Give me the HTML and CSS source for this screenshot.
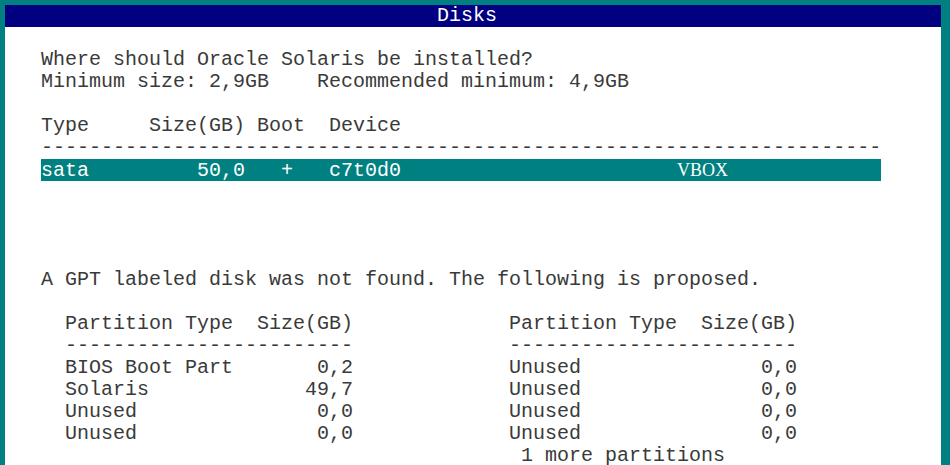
FILE: index.html
```html
<!DOCTYPE html>
<html>
<head>
<meta charset="utf-8">
<link rel="stylesheet" href="styles.css">
<title>Disks</title>
</head>
<body>
<div class="screen">
  <div class="window">
    <div class="title">Disks</div>
    <div class="content">
      <div class="line"></div>
      <div class="line">Where should Oracle Solaris be installed?</div>
      <div class="line">Minimum size: 2,9GB    Recommended minimum: 4,9GB</div>
      <div class="line"></div>
      <div class="line">Type     Size(GB) Boot  Device</div>
      <div class="line">----------------------------------------------------------------------</div>
      <div class="line selected">sata         50,0   +   c7t0d0                       <span class="vbox">VBOX</span></div>
      <div class="line"></div>
      <div class="line"></div>
      <div class="line"></div>
      <div class="line"></div>
      <div class="line">A GPT labeled disk was not found. The following is proposed.</div>
      <div class="line"></div>
      <div class="tables">
        <div class="ptable">
          <div class="line">Partition Type  Size(GB)</div>
          <div class="line">------------------------</div>
          <div class="line">BIOS Boot Part       0,2</div>
          <div class="line">Solaris             49,7</div>
          <div class="line">Unused               0,0</div>
          <div class="line">Unused               0,0</div>
        </div>
        <div class="ptable">
          <div class="line">Partition Type  Size(GB)</div>
          <div class="line">------------------------</div>
          <div class="line">Unused               0,0</div>
          <div class="line">Unused               0,0</div>
          <div class="line">Unused               0,0</div>
          <div class="line">Unused               0,0</div>
          <div class="line"> 1 more partitions</div>
        </div>
      </div>
    </div>
  </div>
</div>
</body>
</html>
```
FILE: styles.css
```css
html, body {
  margin: 0;
  padding: 0;
  background: #008080;
  height: 100%;
  overflow: hidden;
}

.screen {
  padding: 5px 9px 0 5px;
  height: 100%;
  box-sizing: border-box;
}

.window {
  background: #ffffff;
  height: 100%;
  font-family: "Liberation Mono", "DejaVu Sans Mono", monospace;
  font-size: 20px;
  color: #3a3a3a;
}

.title {
  height: 22px;
  line-height: 22px;
  background: #000080;
  color: #ffffff;
  text-align: center;
  padding-right: 12px;
}

.content {
  padding-left: 36px;
}

.line {
  height: 22px;
  line-height: 22px;
  white-space: pre;
}

.selected {
  width: 840px;
  background: #008080;
  color: #ffffff;
}

.vbox {
  font-family: "Liberation Serif", serif;
  font-size: 18px;
  display: inline-block;
  width: 48px;
}

.tables {
  display: flex;
  gap: 156px;
  padding-left: 24px;
}

.ptable {
  width: 288px;
}
```
